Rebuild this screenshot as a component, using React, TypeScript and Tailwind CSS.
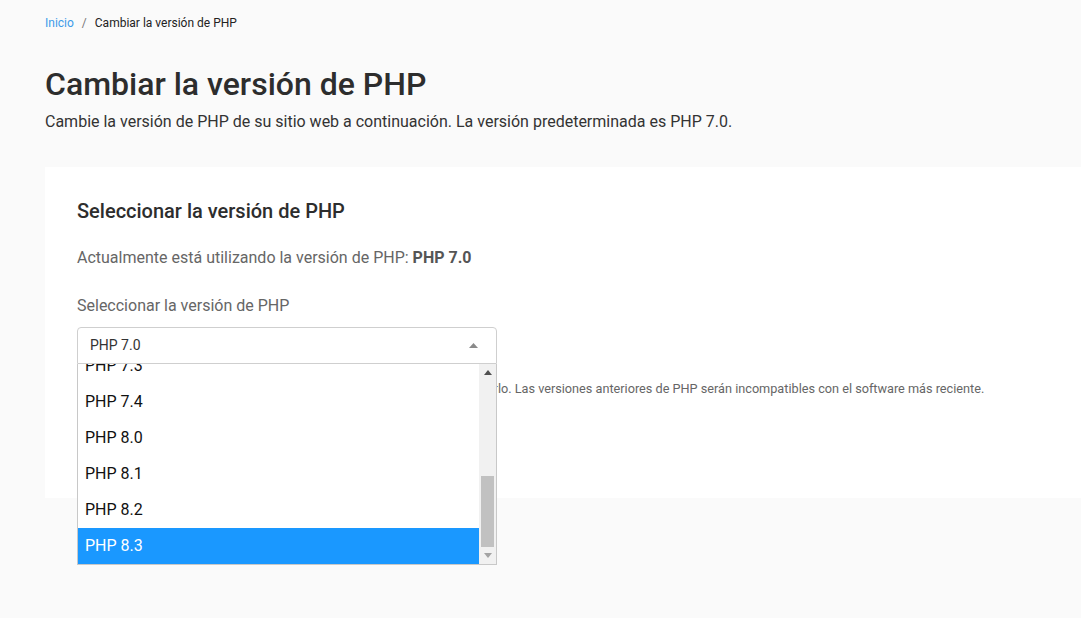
import React from 'react'

const versions = ['5.3', '5.4', '5.5', '5.6', '7.0', '7.1', '7.2', '7.3', '7.4', '8.0', '8.1', '8.2', '8.3']

function ScrollArrow({ up, color }: { up?: boolean; color: string }) {
  return (
    <div className="flex h-[17px] items-center justify-center">
      <svg width="8" height="5" viewBox="0 0 8 5">
        {up ? <path d="M0 5 L4 0 L8 5 Z" fill={color} /> : <path d="M0 0 L4 5 L8 0 Z" fill={color} />}
      </svg>
    </div>
  )
}

function VersionSelect() {
  const selected = '8.3'
  return (
    <div className="relative mt-[9px] w-[420px]">
      {/* closed control */}
      <div className="flex h-[37px] items-center justify-between rounded-t-[4px] border border-[#cfcfcf] bg-white pl-[12px] pr-[18px]">
        <span className="text-[14px] text-[#333]">PHP 7.0</span>
        <svg width="9" height="5" viewBox="0 0 9 5">
          <path d="M0 5 L4.5 0 L9 5 Z" fill="#8a8a8a" />
        </svg>
      </div>

      {/* open option list */}
      <div className="absolute left-0 top-full z-10 flex h-[201px] w-[420px] border border-t-0 border-[#c8c8c8] bg-white">
        <div className="flex-1 overflow-hidden">
          <div className="mt-[-268px]">
            {versions.map((v) => (
              <div
                key={v}
                className={
                  v === selected
                    ? 'flex h-[36px] items-center bg-[#1a98ff] pl-[7px] text-[16px] text-white'
                    : 'flex h-[36px] items-center pl-[7px] text-[16px] text-[#111]'
                }
              >
                PHP {v}
              </div>
            ))}
          </div>
        </div>
        <div className="flex w-[17px] flex-col bg-[#f1f1f1]">
          <ScrollArrow up color="#505050" />
          <div className="flex flex-1 flex-col px-[2px]">
            <div className="mt-auto h-[71px] bg-[#c1c1c1]" />
          </div>
          <ScrollArrow color="#a3a3a3" />
        </div>
      </div>
    </div>
  )
}

export default function App() {
  return (
    <div className="h-[618px] overflow-hidden bg-[#fafafa] font-['Roboto','Liberation_Sans',sans-serif] text-[#333]">
      <div className="pl-[45px]">
        {/* breadcrumb */}
        <nav className="flex items-center pt-[15px] text-[12px] leading-[16px]">
          <span className="text-[#3d9be9]">Inicio</span>
          <span className="mx-[8px] text-[#777]">/</span>
          <span className="text-[#222]">Cambiar la versión de PHP</span>
        </nav>

        <h1 className="mt-[33px] text-[32px] font-medium leading-[40px] text-[#2d2d2d]">Cambiar la versión de PHP</h1>
        <p className="mt-[6px] text-[16px] leading-[24px] text-[#333]">
          Cambie la versión de PHP de su sitio web a continuación. La versión predeterminada es PHP 7.0.
        </p>

        <section className="mt-[33px] w-[1060px] bg-white px-[32px] pb-[32px] pt-[30px]">
          <h2 className="text-[20px] font-medium leading-[28px] text-[#2d2d2d]">Seleccionar la versión de PHP</h2>
          <p className="mt-[21px] text-[16px] leading-[24px] text-[#666]">
            Actualmente está utilizando la versión de PHP: <strong className="font-bold text-[#555]">PHP 7.0</strong>
          </p>
          <label className="mt-[24px] block text-[16px] leading-[24px] text-[#666]">Seleccionar la versión de PHP</label>

          <VersionSelect />

          <p className="mt-[17px] text-[12.7px] leading-[16px] text-[#666]">
            Recomendamos la versión más reciente del PHP en su sitio web, mantenerlo. Las versiones anteriores de PHP serán incompatibles con el software más reciente.
          </p>

          <button className="mt-[33px] h-[36px] rounded-[4px] bg-[#1a98ff] px-[20px] text-[14px] font-medium text-white">
            Guardar
          </button>
        </section>
      </div>
    </div>
  )
}
